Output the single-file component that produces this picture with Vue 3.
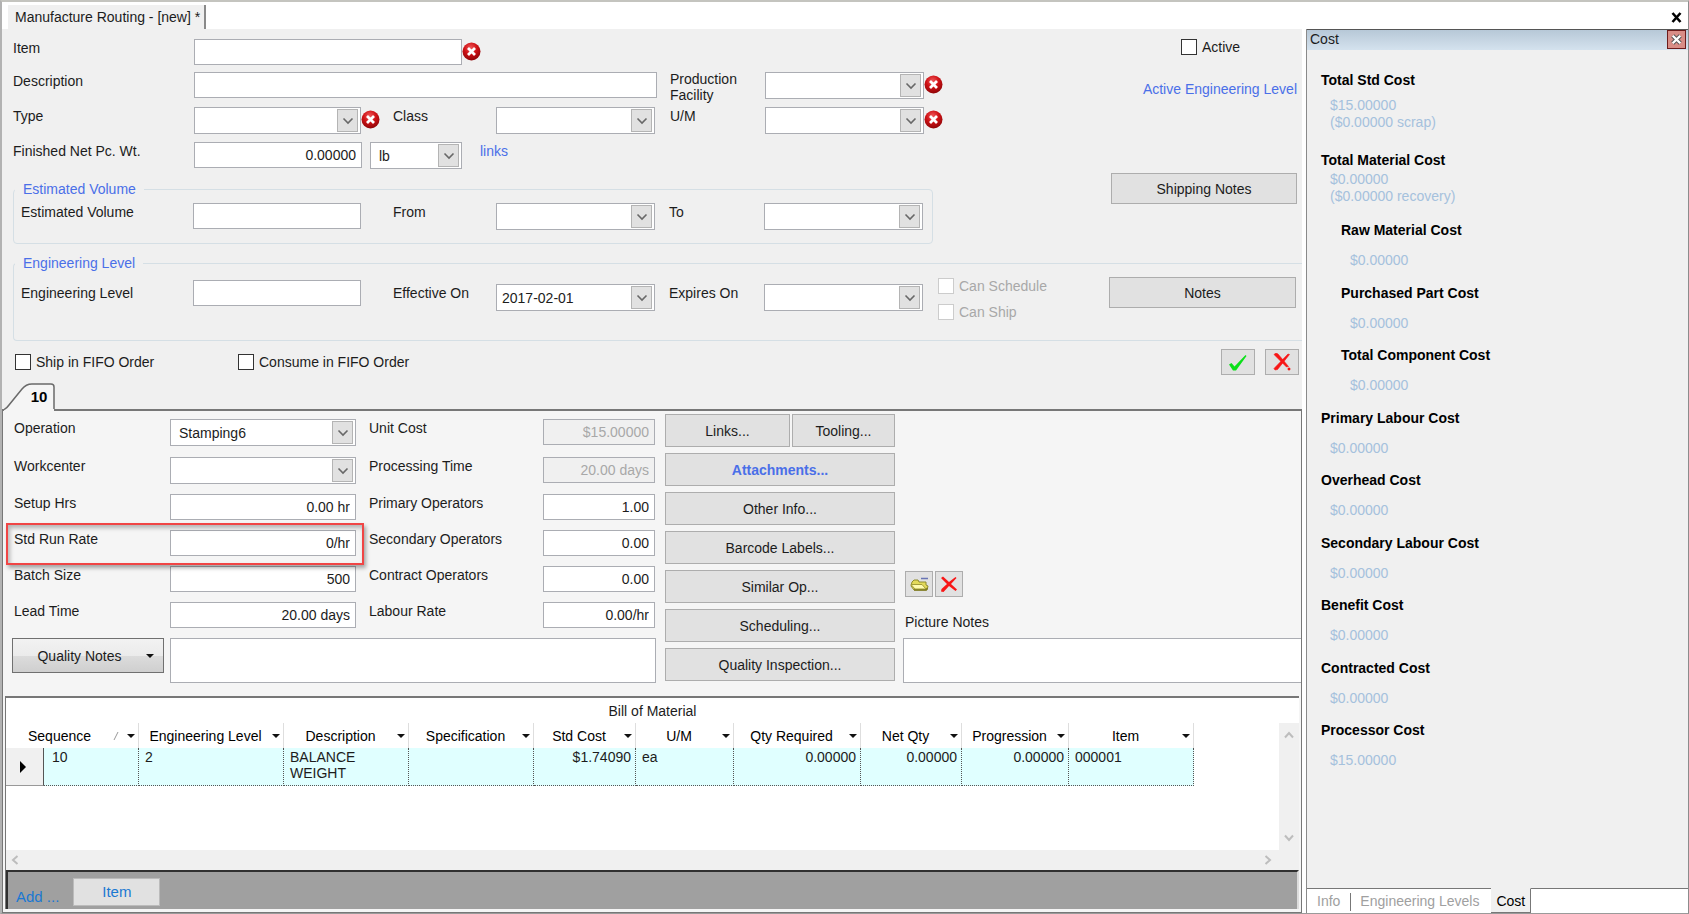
<script setup>
import { ref } from 'vue'

const leftFields = [
  { id: 'operation', label: 'Operation', kind: 'select', value: 'Stamping6' },
  { id: 'workcenter', label: 'Workcenter', kind: 'select', value: '' },
  { id: 'setup', label: 'Setup Hrs', kind: 'text', value: '0.00 hr' },
  { id: 'runrate', label: 'Std Run Rate', kind: 'text', value: '0/hr' },
  { id: 'batch', label: 'Batch Size', kind: 'text', value: '500' },
  { id: 'lead', label: 'Lead Time', kind: 'text', value: '20.00 days' }
]
const rightFields = [
  { id: 'unitcost', label: 'Unit Cost', value: '$15.00000', disabled: true },
  { id: 'proctime', label: 'Processing Time', value: '20.00 days', disabled: true },
  { id: 'primops', label: 'Primary Operators', value: '1.00' },
  { id: 'secops', label: 'Secondary Operators', value: '0.00' },
  { id: 'conops', label: 'Contract Operators', value: '0.00' },
  { id: 'labrate', label: 'Labour Rate', value: '0.00/hr' }
]
const rows = leftFields.map((left, i) => ({ left, right: rightFields[i] }))

const actions = ['Attachments...', 'Other Info...', 'Barcode Labels...', 'Similar Op...', 'Scheduling...', 'Quality Inspection...']

const columns = [
  { name: 'Engineering Level', value: '2' },
  { name: 'Description', value: 'BALANCE WEIGHT' },
  { name: 'Specification', value: '' },
  { name: 'Std Cost', value: '$1.74090', num: true },
  { name: 'U/M', value: 'ea' },
  { name: 'Qty Required', value: '0.00000', num: true },
  { name: 'Net Qty', value: '0.00000', num: true },
  { name: 'Progression', value: '0.00000', num: true },
  { name: 'Item', value: '000001' }
]

const costs = [
  { name: 'Total Std Cost', values: ['$15.00000', '($0.00000 scrap)'], kind: 'total first' },
  { name: 'Total Material Cost', values: ['$0.00000', '($0.00000 recovery)'], kind: 'total' },
  { name: 'Raw Material Cost', values: ['$0.00000'], kind: 'sub' },
  { name: 'Purchased Part Cost', values: ['$0.00000'], kind: 'sub' },
  { name: 'Total Component Cost', values: ['$0.00000'], kind: 'sub' },
  { name: 'Primary Labour Cost', values: ['$0.00000'] },
  { name: 'Overhead Cost', values: ['$0.00000'] },
  { name: 'Secondary Labour Cost', values: ['$0.00000'] },
  { name: 'Benefit Cost', values: ['$0.00000'] },
  { name: 'Contracted Cost', values: ['$0.00000'] },
  { name: 'Processor Cost', values: ['$15.00000'] }
]
const activeTab = ref('Cost')
</script>

<template>
  <div class="window">
    <svg class="defs" aria-hidden="true">
      <defs>
        <radialGradient id="red-ball" cx="45%" cy="30%" r="70%">
          <stop offset="0" stop-color="#f0585a" />
          <stop offset="0.5" stop-color="#cf1216" />
          <stop offset="1" stop-color="#8f0508" />
        </radialGradient>
        <symbol id="chevron" viewBox="0 0 12 8"><path d="M1.5 1.5 6 6l4.500-4.500" fill="none" stroke="#686868" stroke-width="1.600" /></symbol>
        <symbol id="scroll" viewBox="0 0 10 8"><path d="M1 6.500 5 2l4 4.500" fill="none" stroke="#bdbdbd" stroke-width="2" /></symbol>
        <symbol id="error" viewBox="0 0 19 19">
          <circle cx="9.500" cy="9.500" r="9" fill="url(#red-ball)" />
          <path d="M6 6l7 7M13 6l-7 7" stroke="#fff" stroke-width="2.800" />
        </symbol>
        <symbol id="caret" viewBox="0 0 8 4"><path d="M0 0h8L4 4z" fill="#111" /></symbol>
      </defs>
    </svg>

    <header class="tabstrip">
      <button class="doc-tab">Manufacture Routing - [new] *</button>
      <button class="close" aria-label="Close">
        <svg width="11" height="11" viewBox="0 0 11 11"><path d="M1.500 1l8 9M9.500 1l-8 9" stroke="#000" stroke-width="2.600" fill="none" /></svg>
      </button>
    </header>

    <div class="body">
      <main class="main">
        <section class="general">
          <div class="top">
            <div class="top-left">
              <div class="fields">
                <label for="item">Item</label>
                <div class="span3 line"><input id="item" class="box w268" type="text" /><svg class="err"><use href="#error" /></svg></div>

                <label class="newrow" for="desc">Description</label>
                <div class="span3 line"><input id="desc" class="box w463" type="text" /></div>
                <label class="two" for="facility">Production<br />Facility</label>
                <div class="line">
                  <div class="combo w159"><select id="facility" class="box"><option></option></select><span class="drop"><svg><use href="#chevron" /></svg></span></div>
                  <svg class="err"><use href="#error" /></svg>
                </div>

                <label class="newrow" for="type">Type</label>
                <div class="line">
                  <div class="combo w167"><select id="type" class="box"><option></option></select><span class="drop"><svg><use href="#chevron" /></svg></span></div>
                  <svg class="err"><use href="#error" /></svg>
                </div>
                <label for="class">Class</label>
                <div class="combo w159"><select id="class" class="box"><option></option></select><span class="drop"><svg><use href="#chevron" /></svg></span></div>
                <label for="um">U/M</label>
                <div class="line">
                  <div class="combo w159"><select id="um" class="box"><option></option></select><span class="drop"><svg><use href="#chevron" /></svg></span></div>
                  <svg class="err"><use href="#error" /></svg>
                </div>

                <label class="newrow" for="weight">Finished Net Pc. Wt.</label>
                <div class="span3 line weight">
                  <input id="weight" class="box num w168" type="text" value="0.00000" />
                  <div class="combo w92"><select class="box" aria-label="Weight unit"><option>lb</option></select><span class="drop"><svg><use href="#chevron" /></svg></span></div>
                  <a href="#links">links</a>
                </div>
              </div>

              <fieldset class="group volume">
                <legend>Estimated Volume</legend>
                <div class="group-grid">
                  <label for="volume">Estimated Volume</label>
                  <input id="volume" class="box w168" type="text" />
                  <label for="from">From</label>
                  <div class="combo w159"><select id="from" class="box"><option></option></select><span class="drop"><svg><use href="#chevron" /></svg></span></div>
                  <label for="to">To</label>
                  <div class="combo w159"><select id="to" class="box"><option></option></select><span class="drop"><svg><use href="#chevron" /></svg></span></div>
                </div>
              </fieldset>
            </div>

            <div class="top-right">
              <label class="check"><input type="checkbox" />Active</label>
              <a href="#level">Active Engineering Level</a>
              <button class="btn">Shipping Notes</button>
            </div>
          </div>

          <fieldset class="group level">
            <legend>Engineering Level</legend>
            <div class="level-row">
              <div class="group-grid">
                <label class="low" for="level">Engineering Level</label>
                <input id="level" class="box w168" type="text" />
                <label class="low" for="effective">Effective On</label>
                <div class="combo w159 date"><select id="effective" class="box"><option>2017-02-01</option></select><span class="drop"><svg><use href="#chevron" /></svg></span></div>
                <label class="low" for="expires">Expires On</label>
                <div class="combo w159 date"><select id="expires" class="box"><option></option></select><span class="drop"><svg><use href="#chevron" /></svg></span></div>
              </div>
              <div class="cans">
                <label class="check off"><input type="checkbox" disabled />Can Schedule</label>
                <label class="check off"><input type="checkbox" disabled />Can Ship</label>
              </div>
              <button class="btn notes">Notes</button>
            </div>
          </fieldset>

          <div class="fifo">
            <label class="check ship"><input type="checkbox" />Ship in FIFO Order</label>
            <label class="check"><input type="checkbox" />Consume in FIFO Order</label>
            <div class="confirm">
              <button class="icon-btn wide" aria-label="Accept">
                <svg width="20" height="18" viewBox="0 0 20 18"><path d="M1 11.500 3.500 10l3 3.500L17.500 2l1 1L8 17.500H5z" fill="#0be01a" /></svg>
              </button>
              <button class="icon-btn wide" aria-label="Cancel">
                <svg width="20" height="18" viewBox="0 0 20 18"><path d="M2 1.500 4 0l2 1 10.500 12.500-2 .5zM16 1l1.500.5-12 15-2.500.5-1-1.500zM16 15h2v2h-2z" fill="#f81616" stroke="#f81616" stroke-width="0.600" /></svg>
              </button>
            </div>
          </div>
        </section>

        <button class="op-tab">
          <svg width="52" height="28" viewBox="0 0 52 28" aria-hidden="true">
            <path d="M0 28V26.500Q3 25 5 22L18 6Q22 1 28 1H47Q50 1 50 4V28z" fill="#f5f5f5" />
            <path d="M0 26.500Q3 25 5 22L18 6Q22 1 28 1H47Q50 1 50 4V26" fill="none" stroke="#6a6a6a" stroke-width="1.500" />
          </svg>
          <span>10</span>
        </button>

        <section class="operation">
          <div class="op-area">
            <div class="op-fields">
              <template v-for="row in rows" :key="row.left.id">
                <label :for="row.left.id">{{ row.left.label }}</label>
                <div v-if="row.left.kind === 'select'" class="combo w186">
                  <select :id="row.left.id" class="box"><option>{{ row.left.value }}</option></select><span class="drop"><svg><use href="#chevron" /></svg></span>
                </div>
                <input v-else :id="row.left.id" class="box num w186" type="text" :value="row.left.value" />
                <label :for="row.right.id">{{ row.right.label }}</label>
                <input :id="row.right.id" class="box num w112" type="text" :value="row.right.value" :disabled="row.right.disabled" />
              </template>
              <button class="quality">Quality Notes <svg width="8" height="4"><use href="#caret" /></svg></button>
              <textarea class="box area" aria-label="Quality Notes"></textarea>
              <div class="highlight"></div>
            </div>

            <div class="actions">
              <div class="pair"><button class="btn">Links...</button><button class="btn">Tooling...</button></div>
              <button v-for="(a, i) in actions" :key="a" class="btn" :class="{ strong: i === 0 }">{{ a }}</button>
            </div>

            <div class="picture">
              <div class="picture-tools">
                <button class="icon-btn" aria-label="Open picture">
                  <svg width="19" height="16" viewBox="0 0 19 16">
                    <path d="M2 6l2-2h4l1 2h7v3l2 1-1 4H4L1 10z" fill="#e3da5a" stroke="#8f8b2c" />
                    <path d="M1 8.500h11l4 4.500H5z" fill="#fffbb0" stroke="#a39d38" />
                    <path d="M4 14h12l1.500-2" fill="none" stroke="#7d7a20" stroke-width="1.500" />
                    <path d="M11 2.500h7" fill="none" stroke="#6a75b5" stroke-width="1.500" />
                  </svg>
                </button>
                <button class="icon-btn" aria-label="Remove picture">
                  <svg width="18" height="17" viewBox="0 0 18 17"><path d="M1 2 3 .5l6 5.500L15.500 1l1 1L11 8l6 5.500-1.500 1.500-6.500-5L3.500 16 1 15.500 1.500 13 7 8z" fill="#f81616" /></svg>
                </button>
              </div>
              <label for="picnotes">Picture Notes</label>
              <textarea id="picnotes" class="box"></textarea>
            </div>
          </div>

          <div class="bom">
            <div class="bom-title" id="bom-title">Bill of Material</div>
            <div class="bom-body">
              <div class="bom-scroll">
                <table aria-labelledby="bom-title">
                  <colgroup>
                    <col class="c38" /><col class="c95" /><col class="c145" /><col class="c125" /><col class="c125" /><col class="c102" /><col class="c98" /><col class="c127" /><col class="c101" /><col class="c107" /><col class="c125" />
                  </colgroup>
                  <thead>
                    <tr>
                      <th colspan="2" scope="col">
                        <div class="head"><span>Sequence</span><svg class="sort" width="6" height="8" viewBox="0 0 6 8"><path d="M1 8 5 0" stroke="#999" /></svg><svg class="caret"><use href="#caret" /></svg></div>
                      </th>
                      <th v-for="c in columns" :key="c.name" scope="col">
                        <div class="head"><span>{{ c.name }}</span><svg class="caret"><use href="#caret" /></svg></div>
                      </th>
                    </tr>
                  </thead>
                  <tbody>
                    <tr>
                      <td class="marker"><svg width="6" height="12" viewBox="0 0 6 12"><path d="M0 0l6 6-6 6z" fill="#000" /></svg></td>
                      <td class="seq">10</td>
                      <td v-for="c in columns" :key="c.name" :class="{ right: c.num }">{{ c.value }}</td>
                    </tr>
                  </tbody>
                </table>
              </div>
              <div class="vscroll"><svg><use href="#scroll" /></svg><svg class="down"><use href="#scroll" /></svg></div>
            </div>
            <div class="hscroll"><svg class="left"><use href="#scroll" /></svg><svg class="rightward"><use href="#scroll" /></svg></div>
            <div class="adder"><span>Add ...</span><button>Item</button></div>
          </div>
        </section>
      </main>

      <aside class="cost">
        <div class="cost-head">
          <span>Cost</span>
          <button aria-label="Close panel"><svg width="18" height="18" viewBox="0 0 18 18"><path d="M5 5l8 8M13 5l-8 8" stroke="#555" stroke-width="4.500" /><path d="M5 5l8 8M13 5l-8 8" stroke="#fff" stroke-width="2.500" /></svg></button>
        </div>
        <dl>
          <div v-for="c in costs" :key="c.name" :class="c.kind">
            <dt>{{ c.name }}</dt>
            <dd v-for="v in c.values" :key="v">{{ v }}</dd>
          </div>
        </dl>
        <nav class="cost-tabs">
          <button v-for="t in ['Info', 'Engineering Levels', 'Cost']" :key="t" :class="{ on: t === activeTab }" @click="activeTab = t">{{ t }}</button>
          <span class="rest"></span>
        </nav>
      </aside>
    </div>
  </div>
</template>

<style>
body {
  margin: 0;
  background: #f0f0f0;
}
</style>

<style scoped>
* {
  box-sizing: border-box;
}
.window {
  display: flex;
  flex-direction: column;
  min-height: 100vh;
  border: 1px solid #8c8c8c;
  border-width: 2px 1px 1px 2px;
  border-color: #c4c4bf #8c8c8c #9a9a9a #b2b2b2;
  background: #fff;
  color: #1c1c1c;
  font: 14px/18px "Liberation Sans", Arial, sans-serif;
}
button, input, select, textarea {
  margin: 0;
  color: inherit;
  font: inherit;
  border-radius: 0;
}
button {
  padding: 0;
  border: 0;
  background: none;
}
a, legend {
  color: #4a6fe8;
  text-decoration: none;
}
.defs {
  position: absolute;
  width: 0;
  height: 0;
}
.tabstrip {
  display: flex;
  justify-content: space-between;
  height: 27px;
  padding: 3px 6px 0;
}
.doc-tab {
  padding: 0 4px 0 7px;
  border-right: 2px solid #8a8a8a;
  background: #f0f0f0;
}
.close {
  display: flex;
  align-items: center;
}
.body {
  display: flex;
  flex: 1;
}
.main {
  display: flex;
  flex: 1;
  flex-direction: column;
  min-width: 0;
  margin-right: 4px;
  background: #f0f0f0;
}

/* shared controls */
.box {
  height: 26px;
  padding: 0 5px;
  border: 1px solid #abadb3;
  background: #fff;
  appearance: none;
  outline: none;
}
.box:disabled {
  background: #f0f0f0;
  color: #a8a8a8;
}
textarea.box {
  display: block;
  height: 45px;
  resize: none;
}
.num {
  text-align: right;
}
.w92 { width: 92px; }
.w112 { width: 112px; }
.w159 { width: 159px; }
.w167 { width: 167px; }
.w168 { width: 168px; }
.w186 { width: 186px; }
.w268 { width: 268px; }
.w463 { width: 463px; }
.combo {
  position: relative;
  height: 27px;
}
.combo select {
  width: 100%;
  height: 100%;
  padding-left: 8px;
}
.drop {
  position: absolute;
  top: 2px;
  right: 3px;
  bottom: 2px;
  display: flex;
  align-items: center;
  justify-content: center;
  width: 21px;
  border: 1px solid #b4b4b4;
  background: #e1e1e1;
  pointer-events: none;
}
.drop svg {
  width: 12px;
  height: 8px;
}
.line {
  display: flex;
  align-items: flex-start;
}
.err {
  width: 19px;
  height: 19px;
  margin-top: 3px;
}
.btn {
  height: 31px;
  border: 1px solid #adadad;
  background: #e1e1e1;
}
.check {
  display: flex;
  align-items: center;
  gap: 5px;
  height: 16px;
}
.check input {
  width: 16px;
  height: 16px;
  border: 1px solid #333;
  background: #fff;
  appearance: none;
}
.check.off {
  color: #a8a8a8;
}
.check.off input {
  border-color: #ccc;
}
.icon-btn {
  display: flex;
  align-items: center;
  justify-content: center;
  width: 28px;
  height: 26px;
  border: 1px solid #adadad;
  background: #e1e1e1;
}
.icon-btn.wide {
  width: 34px;
}

/* general section */
.general {
  padding: 10px 0 8px 11px;
}
.top {
  display: flex;
  justify-content: space-between;
  padding-right: 5px;
}
.fields {
  display: grid;
  grid-template-columns: 181px 199px 103px 174px 95px 179px;
  grid-template-rows: 33px 35px 35px 33px;
  align-items: start;
}
.newrow {
  grid-column: 1;
}
.span3 {
  grid-column: span 3;
}
.two {
  margin-top: -1px;
  line-height: 16px;
}
.weight {
  gap: 8px;
}
.weight a {
  margin-left: 10px;
}
.group {
  min-width: 0;
  margin: 0;
  padding: 0 7px;
  border: 1px solid #d5dfe5;
  border-radius: 4px;
}
.group legend {
  margin-left: -6px;
  padding: 0 8px;
}
.volume {
  width: 920px;
  margin-top: 5px;
  padding: 5px 7px 13px;
}
.group-grid {
  display: grid;
  grid-template-columns: 172px 200px 103px 173px 95px 160px;
  align-items: start;
}
.top-right {
  display: flex;
  flex-direction: column;
  width: 186px;
}
.top-right .check {
  margin-left: 70px;
}
.top-right a {
  margin-top: 25px;
  text-align: right;
}
.top-right .btn {
  margin-top: 75px;
}
.level {
  margin-top: 10px;
  padding: 5px 6px 20px 7px;
  border-right: 0;
  border-radius: 4px 0 0 4px;
}
.level-row {
  display: flex;
  align-items: flex-start;
}
.level .group-grid {
  padding-top: 3px;
}
.low {
  padding-top: 4px;
}
.date {
  margin-top: 4px;
}
.date select {
  padding-left: 5px;
}
.cans {
  display: grid;
  gap: 10px;
  margin: 1px auto 0 14px;
}
.notes {
  width: 187px;
}
.fifo {
  display: flex;
  align-items: center;
  margin-top: 8px;
  padding: 0 3px 0 2px;
}
.ship {
  width: 223px;
}
.confirm {
  display: flex;
  gap: 10px;
  margin-left: auto;
}
.op-tab {
  position: relative;
  z-index: 1;
  display: grid;
  width: 52px;
  height: 28px;
  margin: 0 0 -2px 2px;
}
.op-tab svg, .op-tab span {
  grid-area: 1 / 1;
}
.op-tab span {
  padding: 5px 0 0 18px;
  color: #000;
  font-size: 15px;
  font-weight: bold;
}

/* operation page */
.operation {
  display: flex;
  flex: 1;
  flex-direction: column;
  border: 1px solid #777;
  border-top-width: 2px;
  background: #f5f5f5;
}
.op-area {
  display: flex;
  padding: 3px 0 13px 11px;
}
.op-fields {
  position: relative;
  display: grid;
  grid-template-columns: 156px 199px 174px 122px;
  grid-template-rows: 38px 37px;
  grid-auto-rows: 36px;
  align-items: start;
  padding-top: 5px;
}
.quality {
  display: flex;
  align-items: center;
  justify-content: center;
  gap: 24px;
  width: 152px;
  height: 35px;
  margin-left: -2px;
  padding-left: 15px;
  border: 1px solid #707070;
  background: linear-gradient(#f2f2f2 0%, #ebebeb 50%, #dcdcdc 51%, #cfcfcf 100%);
}
.area {
  grid-column: 2 / 5;
  width: 486px;
}
.highlight {
  position: absolute;
  top: 109px;
  left: -8px;
  width: 358px;
  height: 42px;
  border: 2px solid #f04545;
  box-shadow: 2px 3px 4px #0005, inset 2px 3px 4px #0004;
  pointer-events: none;
}
.actions {
  display: flex;
  flex-direction: column;
  gap: 6px;
  width: 230px;
}
.actions .btn {
  height: 33px;
}
.pair {
  display: grid;
  grid-template-columns: 125px 1fr;
  gap: 2px;
}
.strong {
  color: #4a6fe8;
  font-weight: bold;
}
.picture {
  flex: 1;
  min-width: 0;
  padding: 157px 0 0 8px;
}
.picture-tools {
  display: flex;
  gap: 2px;
  margin: 0 0 16px 2px;
}
.picture label {
  display: block;
  margin: 0 0 7px 2px;
}
.picture textarea {
  width: 100%;
  border-right: 0;
}

/* bill of material */
.bom {
  display: flex;
  flex: 1;
  flex-direction: column;
  margin: 0 2px 3px 2px;
  border-top: 2px solid #777;
  border-left: 1px solid #777;
  background: #fff;
}
.bom-title {
  padding: 4px 0 3px;
  text-align: center;
}
.bom-body {
  display: flex;
  flex: 1;
}
.bom-scroll {
  flex: 1;
  min-width: 0;
  overflow: hidden;
}
table {
  width: 1188px;
  border-spacing: 0;
  table-layout: fixed;
}
.c38 { width: 38px; }
.c95 { width: 95px; }
.c145 { width: 145px; }
.c125 { width: 125px; }
.c102 { width: 102px; }
.c98 { width: 98px; }
.c127 { width: 127px; }
.c101 { width: 101px; }
.c107 { width: 107px; }
th {
  height: 25px;
  padding: 0 3px 0 0;
  border-right: 1px solid #dedede;
  color: #000;
  font-weight: normal;
}
.head {
  display: flex;
  align-items: center;
  white-space: nowrap;
}
.head span {
  flex: 1;
}
.sort {
  margin-right: 8px;
}
.caret {
  width: 8px;
  height: 4px;
}
td {
  height: 38px;
  padding: 1px 4px 0 6px;
  border-right: 1px dotted #555;
  border-bottom: 1px dotted #555;
  background: #e0ffff;
  line-height: 16px;
  vertical-align: top;
}
.marker {
  padding: 0 0 0 14px;
  border-right-style: solid;
  border-bottom: 1px solid #999;
  background: #f0f0f0;
  vertical-align: middle;
}
.marker svg {
  display: block;
}
.seq {
  padding-left: 8px;
}
.right {
  text-align: right;
}
.vscroll {
  display: flex;
  flex-direction: column;
  align-items: center;
  justify-content: space-between;
  width: 20px;
  padding: 8px 0;
  background: #f0f0f0;
}
.vscroll svg, .hscroll svg {
  width: 10px;
  height: 8px;
}
.down {
  transform: rotate(180deg);
}
.left {
  transform: rotate(-90deg);
}
.rightward {
  transform: rotate(90deg);
}
.hscroll {
  display: flex;
  align-items: center;
  justify-content: space-between;
  height: 20px;
  padding: 0 26px 0 4px;
  background: #f0f0f0;
}
.adder {
  display: flex;
  align-items: flex-end;
  gap: 14px;
  height: 39px;
  padding: 0 0 3px 8px;
  border-top: 2px solid #303030;
  border-right: 2px solid #ddd;
  border-left: 2px solid #303030;
  background: #a0a0a0;
  color: #1b78d2;
  font-size: 15px;
}
.adder button {
  width: 87px;
  height: 28px;
  border: 1px solid #bbb;
  background: #e1e1e1;
}

/* cost panel */
.cost {
  display: flex;
  flex-direction: column;
  width: 382px;
  border-left: 1px solid #8a8a8a;
  background: #f0f0f0;
}
.cost-head {
  display: flex;
  justify-content: space-between;
  height: 21px;
  padding: 0 2px 0 3px;
  border-top: 1px solid #555;
  background: linear-gradient(#b7c8d7, #d4e2ee);
}
.cost-head button {
  width: 19px;
  height: 19px;
  border: 1px solid #6d1c1c;
  background: #d98d86;
}
.cost-head svg {
  display: block;
  width: 17px;
  height: 17px;
}
dl {
  display: grid;
  flex: 1;
  grid-template-rows: 80px 70px;
  grid-auto-rows: 63px 62px;
  align-content: start;
  margin: 0;
  padding: 21px 0 0 14px;
}
dt {
  margin-bottom: 13px;
  color: #000;
  font-weight: bold;
}
dd {
  margin: 0 0 0 9px;
  color: #a5c1dd;
  line-height: 17px;
}
.total dt {
  margin-bottom: 2px;
}
.first dt {
  margin-bottom: 8px;
}
.sub {
  padding-left: 20px;
}
.cost-tabs {
  display: flex;
  height: 25px;
}
.cost-tabs button {
  padding: 0 10px;
  border-top: 1px solid #777;
  background: #fff;
  color: #a0a0a0;
}
.cost-tabs button:nth-child(2) {
  padding-right: 12px;
  background: linear-gradient(#777, #777) 0 4px / 1px 18px no-repeat #fff;
}
.cost-tabs button.on {
  padding: 0 5px;
  border-top-color: #f0f0f0;
  border-right: 1px solid #777;
  border-bottom: 1px solid #777;
  background: #f0f0f0;
  color: #000;
}
.rest {
  flex: 1;
  border-top: 1px solid #777;
  background: #fff;
}
</style>
